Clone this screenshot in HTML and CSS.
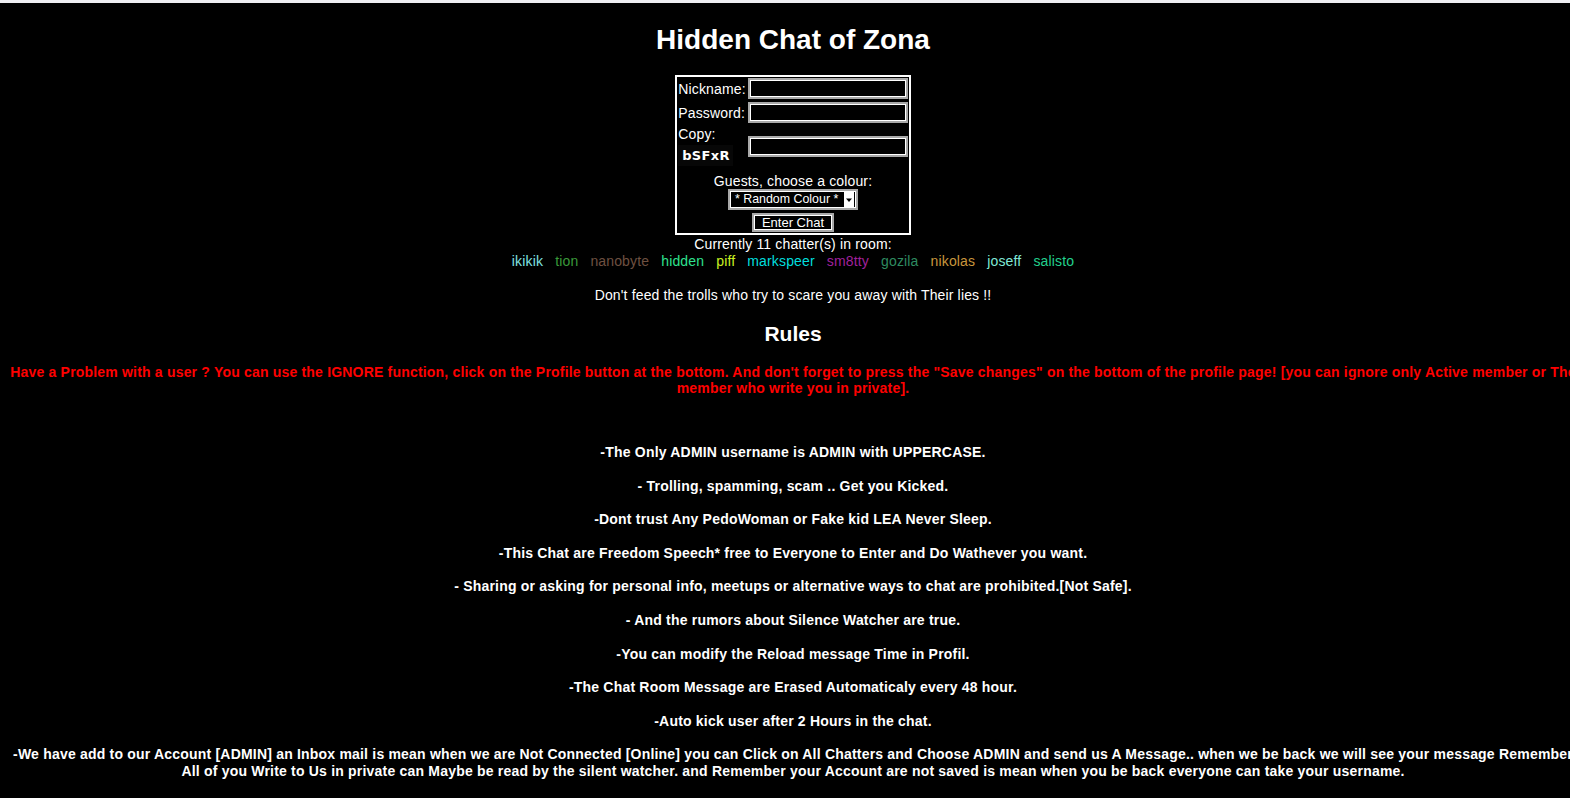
FILE: index.html
```html
<!DOCTYPE html>
<html>
<head>
<meta charset="utf-8">
<title>Hidden Chat of Zona</title>
<link rel="stylesheet" href="styles.css">
</head>
<body>
<div class="topbar"></div>
<div class="page">
  <h1 class="title">Hidden Chat of Zona</h1>
  <form class="login-form">
    <table class="login">
      <tr>
        <td class="lbl">Nickname:</td>
        <td><input class="field" type="text"></td>
      </tr>
      <tr>
        <td class="lbl">Password:</td>
        <td><input class="field" type="password"></td>
      </tr>
      <tr>
        <td class="lbl">Copy:<div class="captcha">bSFxR</div></td>
        <td class="mid"><input class="field" type="text"></td>
      </tr>
      <tr>
        <td colspan="2" class="guest">
          <div class="guest-label">Guests, choose a colour:</div>
          <div class="select"><span class="select-text">* Random Colour *</span><span class="select-btn"><svg width="8" height="6" viewBox="0 0 8 6"><path d="M1 1.5h6L4 5z" fill="#000"/></svg></span></div>
          <div><button class="enter" type="button">Enter Chat</button></div>
        </td>
      </tr>
    </table>
  </form>
  <div class="count">Currently 11 chatter(s) in room:</div>
  <div class="names">
    <span class="n c1">ikikik</span>
    <span class="n c2">tion</span>
    <span class="n c3">nanobyte</span>
    <span class="n c4">hidden</span>
    <span class="n c5">piff</span>
    <span class="n c6">markspeer</span>
    <span class="n c7">sm8tty</span>
    <span class="n c8">gozila</span>
    <span class="n c9">nikolas</span>
    <span class="n c10">joseff</span>
    <span class="n c11">salisto</span>
  </div>
  <p class="notice">Don't feed the trolls who try to scare you away with Their lies !!</p>
  <h2 class="rules-title">Rules</h2>
  <p class="warn">Have a Problem with a user ? You can use the IGNORE function, click on the Profile button at the bottom. And don't forget to press the "Save changes" on the bottom of the profile page! [you can ignore only Active member or The member who write you in private].</p>
  <div class="rules">
    <p>-The Only ADMIN username is ADMIN with UPPERCASE.</p>
    <p>- Trolling, spamming, scam .. Get you Kicked.</p>
    <p>-Dont trust Any PedoWoman or Fake kid LEA Never Sleep.</p>
    <p>-This Chat are Freedom Speech* free to Everyone to Enter and Do Wathever you want.</p>
    <p>- Sharing or asking for personal info, meetups or alternative ways to chat are prohibited.[Not Safe].</p>
    <p>- And the rumors about Silence Watcher are true.</p>
    <p>-You can modify the Reload message Time in Profil.</p>
    <p>-The Chat Room Message are Erased Automaticaly every 48 hour.</p>
    <p>-Auto kick user after 2 Hours in the chat.</p>
    <p>-We have add to our Account [ADMIN] an Inbox mail is mean when we are Not Connected [Online] you can Click on All Chatters and Choose ADMIN and send us A Message.. when we be back we will see your message Remember All of you Write to Us in private can Maybe be read by the silent watcher. and Remember your Account are not saved is mean when you be back everyone can take your username.</p>
  </div>
</div>
</body>
</html>
```

FILE: styles.css
```css
html, body {
  margin: 0;
  padding: 0;
  background: #000;
}
body {
  color: #fff;
  font-family: Arial, "Liberation Sans", Helvetica, sans-serif;
  font-size: 14px;
  letter-spacing: 0.15px;
  overflow: hidden;
}
.topbar {
  height: 3px;
  background: #efeff3;
}
.page {
  width: 1570px;
  margin-left: 8px;
  text-align: center;
}
.title {
  font-size: 28px;
  font-weight: bold;
  line-height: 32px;
  letter-spacing: 0;
  margin: 21px 0 19px;
}
.login-form {
  margin: 0;
}
.login {
  margin: 0 auto;
  border: 2px solid #fff;
  border-collapse: separate;
  border-spacing: 0;
  text-align: left;
}
.login td {
  padding: 1px 1px 2px 1px;
  vertical-align: middle;
  line-height: 16px;
}
.lbl {
  vertical-align: top;
  white-space: nowrap;
}
.captcha {
  display: block;
  width: fit-content;
  margin: 3px 0 0 0;
  padding: 3px 3px 2px 4px;
  background: #070707;
  font-family: "DejaVu Sans", sans-serif;
  font-size: 13px;
  font-weight: bold;
  letter-spacing: 0.3px;
  line-height: 16px;
}
.field {
  display: block;
  box-sizing: border-box;
  width: 160px;
  height: 21px;
  margin: 0;
  padding: 0 2px;
  background: #000;
  color: #fff;
  border: 2px solid #a8a8a8;
  box-shadow: inset 0 0 0 1px #fff;
  outline: none;
}
.guest {
  text-align: center;
}
.login td.guest {
  padding: 5px 1px 1px 1px;
}
.guest-label {
  line-height: 16px;
}
.select {
  display: inline-flex;
  align-items: center;
  box-sizing: border-box;
  width: 130px;
  height: 21px;
  border: 2px solid #a8a8a8;
  box-shadow: inset 0 0 0 1px #fff;
  background: #000;
  padding: 0 2px 0 5px;
  vertical-align: top;
  white-space: nowrap;
}
.select-text {
  flex: 1;
  text-align: left;
  font-size: 12.4px;
  letter-spacing: 0;
  line-height: 15px;
}
.select-btn {
  width: 10px;
  height: 15px;
  background: #fff;
  display: flex;
  align-items: center;
  justify-content: center;
}
.enter {
  box-sizing: border-box;
  width: 82px;
  height: 19px;
  margin-top: 3px;
  padding: 0;
  background: #000;
  color: #fff;
  font-family: Arial, "Liberation Sans", sans-serif;
  font-size: 13px;
  line-height: 15px;
  border: 2px solid #a8a8a8;
  box-shadow: inset 0 0 0 1px #fff;
}
.count {
  line-height: 16px;
  margin-top: 1px;
}
.names {
  line-height: 16px;
  margin-top: 1px;
}
.n {
  margin: 0 4px;
}
.c1 { color: #7fe0e0; }
.c2 { color: #3a9a3a; }
.c3 { color: #6e5040; }
.c4 { color: #2ee08e; }
.c5 { color: #c8f020; }
.c6 { color: #00dede; }
.c7 { color: #a0209c; }
.c8 { color: #2e8b60; }
.c9 { color: #c8963c; }
.c10 { color: #7fe8d6; }
.c11 { color: #22d08e; }
.notice {
  margin: 18px 0 0;
  line-height: 16px;
}
.rules-title {
  font-size: 21px;
  line-height: 24px;
  letter-spacing: 0;
  margin: 19px 0 0;
}
.warn {
  color: #f00;
  font-weight: bold;
  line-height: 16px;
  letter-spacing: 0.19px;
  margin: 18px 0 0;
}
.rules {
  margin-top: 48px;
  font-weight: bold;
  letter-spacing: 0.2px;
}
.rules p {
  margin: 0 0 16.8px;
  line-height: 16.8px;
}
```
